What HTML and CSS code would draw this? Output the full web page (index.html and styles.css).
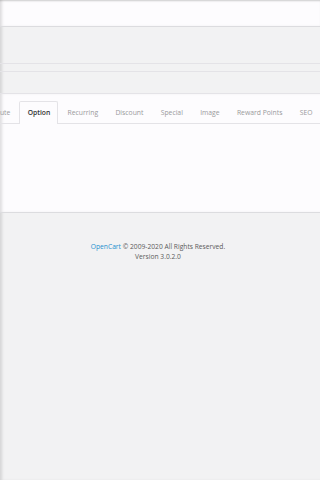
FILE: index.html
```html
<!DOCTYPE html>
<html lang="en">
<head>
    <meta charset="UTF-8">
    <meta name="viewport" content="width=device-width, initial-scale=1.0">
    <title>Edit Product</title>
    <link rel="stylesheet" href="styles.css">
</head>
<body>
    <div id="container">
        <header id="header"></header>

        <div class="page-header"></div>
        <div class="breadcrumb-bar"></div>

        <div class="panel">
            <ul class="nav-tabs">
                <li><a href="#tab-attribute">Attribute</a></li>
                <li class="active"><a href="#tab-option">Option</a></li>
                <li><a href="#tab-recurring">Recurring</a></li>
                <li><a href="#tab-discount">Discount</a></li>
                <li><a href="#tab-special">Special</a></li>
                <li><a href="#tab-image">Image</a></li>
                <li><a href="#tab-reward">Reward Points</a></li>
                <li><a href="#tab-seo">SEO</a></li>
            </ul>
            <div class="tab-content"></div>
        </div>

        <footer id="footer">
            <a href="#">OpenCart</a> &copy; 2009-2020 All Rights Reserved.<br>
            Version 3.0.2.0
        </footer>
    </div>
</body>
</html>
```

FILE: styles.css
```css
body {
    font-family: "Open Sans", sans-serif;
    background-color: #f2f2f3;
    margin: 0;
    padding: 0;
    color: #666;
}
#container {
    min-height: 480px;
    box-shadow: inset 3px 0 3px -1px rgba(0, 0, 0, 0.12);
    overflow: hidden;
}
#header {
    height: 26px;
    background-color: #fdfcfe;
    border-bottom: 1px solid #dcdcdf;
    box-shadow: inset 0 2px 2px -1px rgba(0, 0, 0, 0.18), inset 3px 0 3px -1px rgba(0, 0, 0, 0.12);
}
.page-header {
    height: 36px;
    border-bottom: 1px solid #e4e3e7;
}
.breadcrumb-bar {
    height: 7px;
    border-bottom: 1px solid #e4e3e7;
    margin-bottom: 21px;
}
.panel {
    background-color: #fdfcfe;
    border-top: 1px solid #e4e3e7;
    border-bottom: 1px solid #dcdcdf;
    padding-top: 7px;
    box-shadow: inset 3px 0 3px -1px rgba(0, 0, 0, 0.12);
}
.nav-tabs {
    display: flex;
    list-style: none;
    margin: 0;
    padding: 0;
    border-bottom: 1px solid #e4e3e7;
    white-space: nowrap;
}
.nav-tabs li {
    margin-bottom: -1px;
    margin-right: 1px;
}
.nav-tabs li:first-child {
    margin-left: -26px;
}
.nav-tabs a {
    display: block;
    padding: 0 7.15px;
    height: 21px;
    line-height: 21px;
    font-size: 6.8px;
    color: #9a9a9c;
    text-decoration: none;
    border: 1px solid transparent;
    border-bottom: none;
    border-radius: 2px 2px 0 0;
}
.nav-tabs .active a {
    color: #333;
    font-weight: 600;
    background-color: #fdfcfe;
    border-color: #e4e3e7;
    height: 22px;
}
.tab-content {
    height: 88px;
}
#footer {
    text-align: center;
    font-size: 6.7px;
    line-height: 10px;
    color: #5a5a5a;
    padding: 29px 4px 0 0;
}
#footer a {
    color: #1e91cf;
    text-decoration: none;
}
```
